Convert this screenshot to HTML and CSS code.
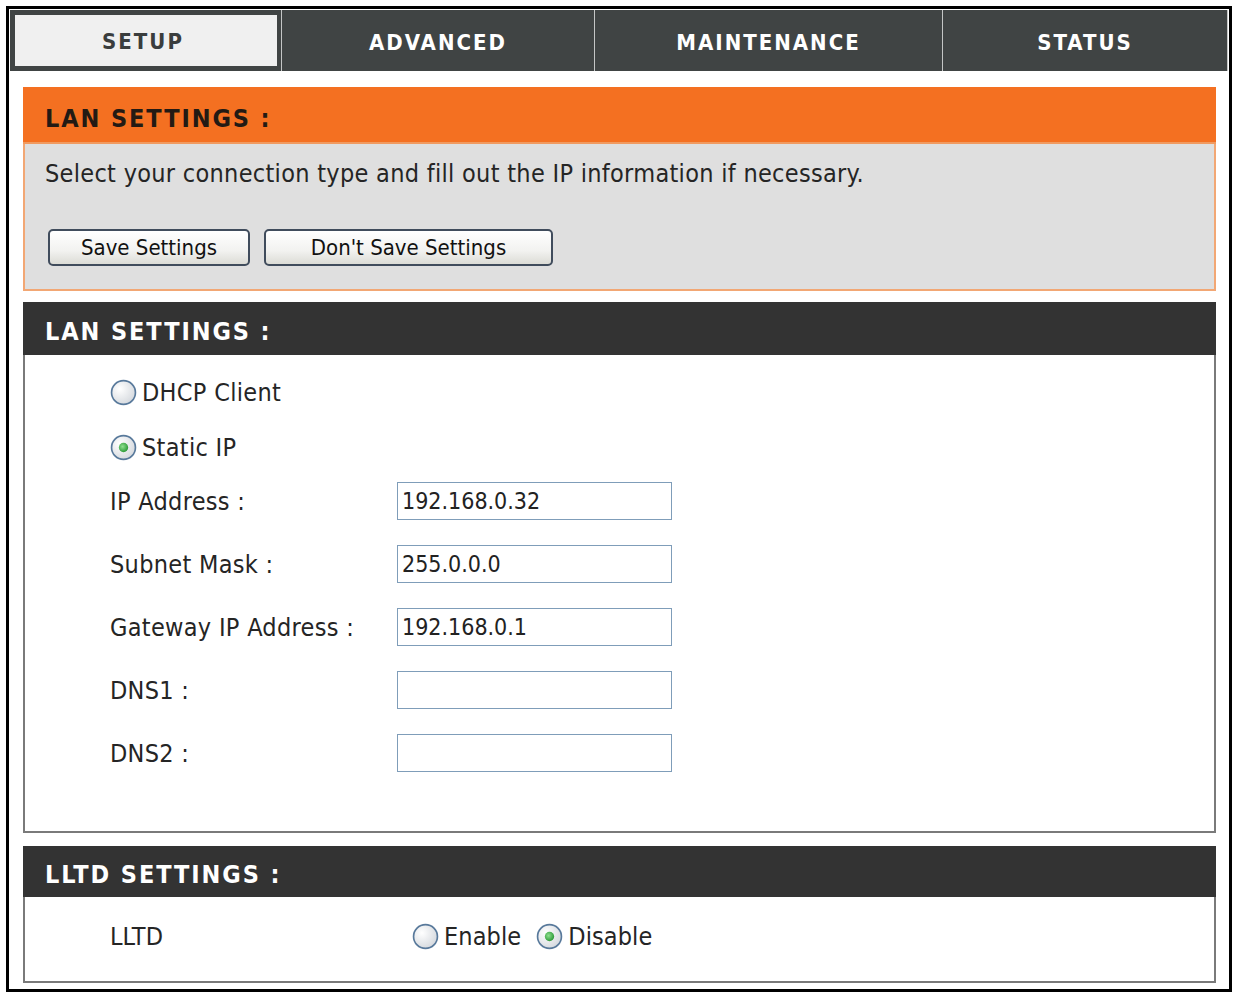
FILE: index.html
```
<!DOCTYPE html>
<html lang="en">
<head>
  <meta charset="UTF-8">
  <title>LAN Settings</title>
  <link rel="stylesheet" href="styles.css">
</head>
<body>
  <div class="frame">
    <nav class="tabs">
      <div class="tab active">SETUP</div>
      <div class="tab">ADVANCED</div>
      <div class="tab">MAINTENANCE</div>
      <div class="tab">STATUS</div>
    </nav>

    <div class="content">
      <section class="box box-orange">
        <h2 class="box-head">LAN SETTINGS :</h2>
        <div class="box-body intro">
          <p>Select your connection type and fill out the IP information if necessary.</p>
          <div class="buttons">
            <button class="btn btn-save">Save Settings</button>
            <button class="btn btn-dont">Don't Save Settings</button>
          </div>
        </div>
      </section>

      <section class="box box-lan">
        <h2 class="box-head">LAN SETTINGS :</h2>
        <div class="box-body lan">
          <label class="radio-row first">
            <svg class="radio" viewBox="0 0 26 26"><defs><radialGradient id="rg1" cx="35%" cy="35%" r="70%"><stop offset="0" stop-color="#ffffff"/><stop offset="1" stop-color="#d5d9de"/></radialGradient></defs><circle cx="13" cy="13" r="11.5" fill="url(#rg1)" stroke="#58799b" stroke-width="1.6"/></svg>
            <span>DHCP Client</span>
          </label>
          <label class="radio-row second">
            <svg class="radio" viewBox="0 0 26 26"><defs><radialGradient id="rg2" cx="35%" cy="35%" r="70%"><stop offset="0" stop-color="#ffffff"/><stop offset="1" stop-color="#d5d9de"/></radialGradient><radialGradient id="dot2" cx="40%" cy="40%" r="60%"><stop offset="0" stop-color="#8fe08f"/><stop offset="1" stop-color="#2f9c3a"/></radialGradient></defs><circle cx="13" cy="13" r="11.5" fill="url(#rg2)" stroke="#58799b" stroke-width="1.6"/><circle cx="13" cy="13" r="4.5" fill="url(#dot2)"/></svg>
            <span>Static IP</span>
          </label>
          <div class="field first-field">
            <span class="field-label">IP Address :</span>
            <input class="field-input" type="text" value="192.168.0.32">
          </div>
          <div class="field">
            <span class="field-label">Subnet Mask :</span>
            <input class="field-input" type="text" value="255.0.0.0">
          </div>
          <div class="field">
            <span class="field-label">Gateway IP Address :</span>
            <input class="field-input" type="text" value="192.168.0.1">
          </div>
          <div class="field">
            <span class="field-label">DNS1 :</span>
            <input class="field-input" type="text" value="">
          </div>
          <div class="field">
            <span class="field-label">DNS2 :</span>
            <input class="field-input" type="text" value="">
          </div>
        </div>
      </section>

      <section class="box box-lltd">
        <h2 class="box-head">LLTD SETTINGS :</h2>
        <div class="box-body lltd">
          <span class="field-label">LLTD</span>
          <label class="radio-inline">
            <svg class="radio" viewBox="0 0 26 26"><defs><radialGradient id="rg3" cx="35%" cy="35%" r="70%"><stop offset="0" stop-color="#ffffff"/><stop offset="1" stop-color="#d5d9de"/></radialGradient></defs><circle cx="13" cy="13" r="11.5" fill="url(#rg3)" stroke="#58799b" stroke-width="1.6"/></svg>
            <span>Enable</span>
          </label>
          <label class="radio-inline">
            <svg class="radio" viewBox="0 0 26 26"><defs><radialGradient id="rg4" cx="35%" cy="35%" r="70%"><stop offset="0" stop-color="#ffffff"/><stop offset="1" stop-color="#d5d9de"/></radialGradient><radialGradient id="dot4" cx="40%" cy="40%" r="60%"><stop offset="0" stop-color="#8fe08f"/><stop offset="1" stop-color="#2f9c3a"/></radialGradient></defs><circle cx="13" cy="13" r="11.5" fill="url(#rg4)" stroke="#58799b" stroke-width="1.6"/><circle cx="13" cy="13" r="4.5" fill="url(#dot4)"/></svg>
            <span>Disable</span>
          </label>
        </div>
      </section>
    </div>
  </div>
</body>
</html>
```

FILE: styles.css
```
* { box-sizing: border-box; }
body {
  margin: 0;
  background: #fff;
  font-family: 'DejaVu Sans Condensed', 'DejaVu Sans', sans-serif;
  color: #252525;
}
.frame {
  width: 1226px; height: 986px;
  margin: 6px 0 0 6px;
  border: 3px solid #000;
  padding: 1px;
}

/* top tabs */
.tabs {
  display: flex;
  height: 61px;
  background: #404444;
}
.tab {
  display: flex; align-items: center; justify-content: center;
  padding-top: 3px;
  color: #fff;
  font-weight: bold; font-size: 22px;
  letter-spacing: 2px;
  border-left: 1px solid #c4c6c6;
}
.tab:nth-child(1) { width: 271px; }
.tab:nth-child(2) { width: 313px; }
.tab:nth-child(3) { width: 348px; }
.tab:nth-child(4) { width: 286px; border-right: 1px solid #c4c6c6; }
.tab.active {
  background: #f0f0f0;
  color: #3a3d3d;
  border: 5px solid #404444;
  border-right-width: 4px;
  padding: 2px 6px 0 0;
}

.content { padding: 16px 12px 0 13px; }
.box {
  border: 2px solid #7a7a7a;
  margin-bottom: 11px;
}
.box-head {
  margin: -2px -2px 0;
  padding: 5px 0 0 22px;
  display: flex; align-items: center;
  background: #333;
  color: #fff;
  font-size: 25px; font-weight: bold;
  letter-spacing: 1.9px;
}

.box-orange {
  height: 204px;
  border-color: #f2a774;
  background: #dfdfdf;
}
.box-orange .box-head {
  height: 57px;
  padding-top: 7px;
  background: #f47021;
  color: #231a14;
  border-bottom: 2px solid #f09a60;
}
.intro { padding: 14px 0 0 20px; }
.intro p {
  margin: 0;
  font-size: 25px;
  letter-spacing: 0.3px;
  line-height: 32px;
}
.buttons { display: flex; gap: 14px; margin-top: 39px; padding-left: 3px; }
.btn {
  height: 37px;
  border: 2px solid #404c5c;
  border-radius: 5px;
  background: linear-gradient(#ffffff, #f2f2f0 60%, #dcdcd6);
  font-family: inherit;
  font-size: 22px;
  color: #111;
  padding: 0;
}
.btn-save { width: 202px; }
.btn-dont { width: 289px; }

.box-lan { height: 531px; margin-bottom: 13px; }
.box-lan .box-head { height: 53px; }
.box-lltd .box-head { height: 51px; }

.lan {
  display: flex; flex-direction: column;
  padding: 23px 0 0 85px;
  font-size: 25px;
  letter-spacing: 0.3px;
}
.radio-row, .radio-inline {
  display: flex; align-items: center;
  height: 28px;
}
.radio { width: 27px; height: 27px; margin-right: 5px; flex-shrink: 0; }
.radio-row.second { margin-top: 27px; }
.field {
  display: flex; align-items: center;
  height: 38px;
  margin-top: 25px;
}
.field.first-field { margin-top: 21px; }
.field-label { width: 287px; }
.field-input {
  width: 275px; height: 38px;
  border: 1px solid #7f9db9;
  padding: 0 4px;
  font-family: inherit;
  font-size: 23px;
  color: #222;
  background: #fff;
}

.box-lltd { height: 137px; }
.lltd {
  display: flex; align-items: center;
  padding: 25px 0 0 85px;
  font-size: 25px;
  letter-spacing: 0.1px;
}
.lltd .field-label { width: 302px; }
.radio-inline { margin-right: 15px; }
```
